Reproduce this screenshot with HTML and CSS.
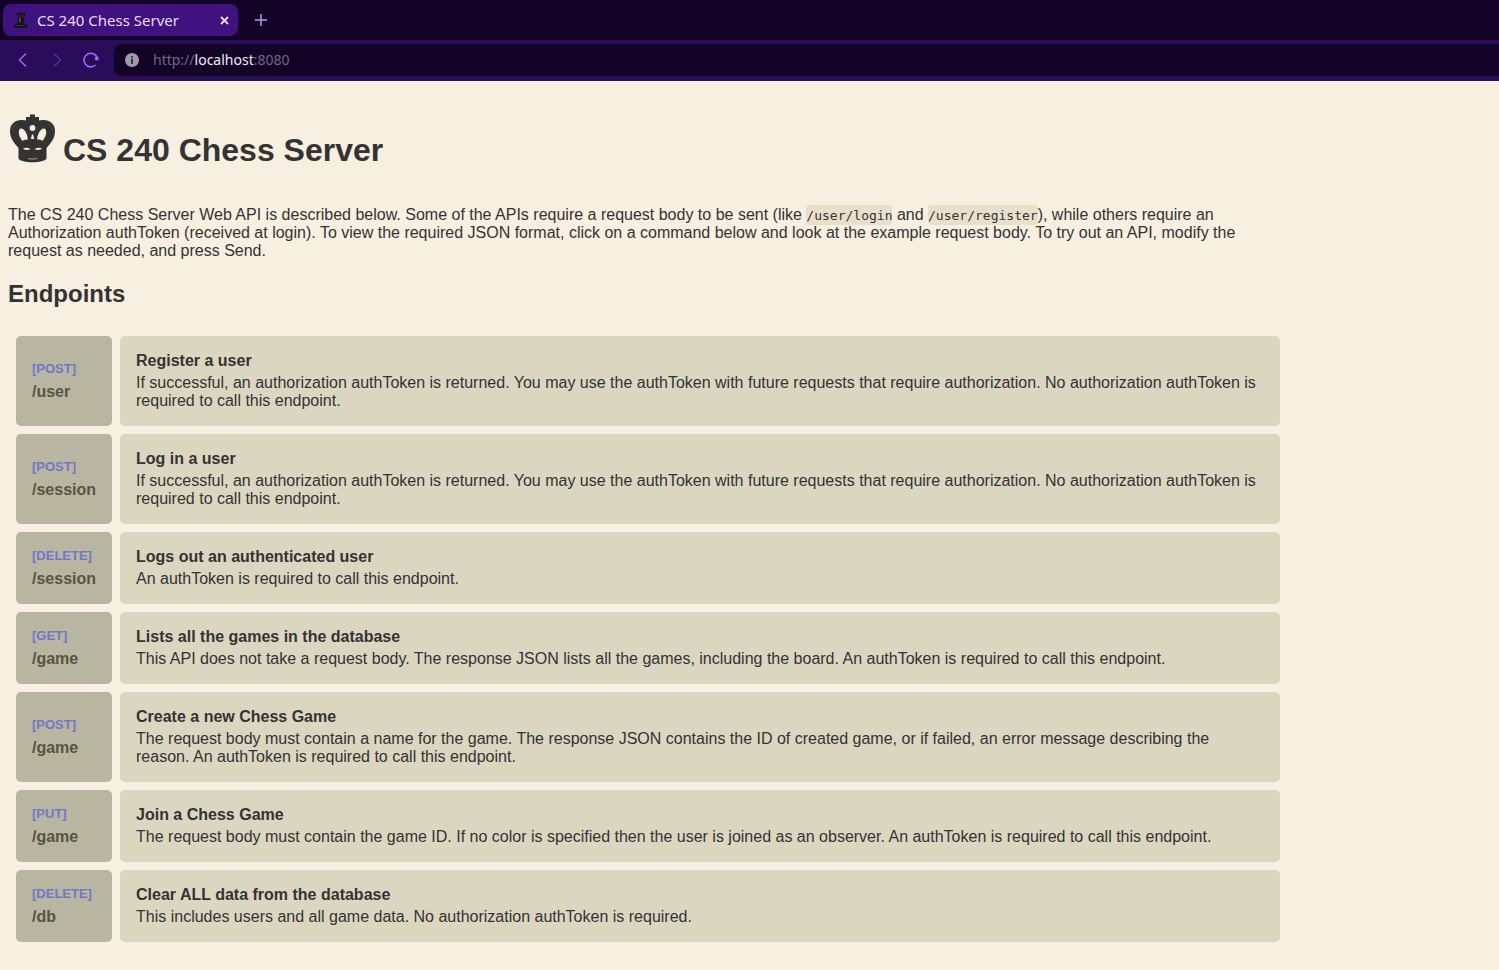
FILE: index.html
```html
<!DOCTYPE html>
<html lang="en">
<head>
<meta charset="utf-8">
<title>CS 240 Chess Server</title>
<link rel="stylesheet" href="styles.css">
</head>
<body>
<header class="browser">
  <div class="tab-strip">
    <div class="tab">
      <svg class="favicon" viewBox="0 0 16 16" aria-hidden="true">
        <path fill="#15131a" d="M4 .500h2V2h1V.500h2.500V2h1V.500H12V4l-1.500 1.500.5 5 1.500 1.500 2 1.500V16H1v-2.500L3.500 12 5 10.500l.5-5L4 4z"/>
        <path fill="#4c4a50" d="M6.500 5.500h1.500v5H6z"/>
        <path fill="#38363c" d="M5 3.500h6v1H5zM3 13h9v1H3z"/>
      </svg>
      <span class="tab-title">CS 240 Chess Server</span>
      <button class="tab-close" aria-label="Close tab">
        <svg width="9" height="9" viewBox="0 0 9 9"><path d="M1 1l7 7M8 1L1 8" fill="none" stroke="#e9dcff" stroke-width="1.800"/></svg>
      </button>
    </div>
    <button class="new-tab" aria-label="New tab">
      <svg width="12" height="12" viewBox="0 0 12 12"><path d="M6 0v12M0 6h12" fill="none" stroke="#b49be6" stroke-width="1.500"/></svg>
    </button>
  </div>
  <div class="toolbar">
    <button class="nav" aria-label="Back">
      <svg width="16" height="16" viewBox="0 0 16 16"><path d="M11 1.500L4.500 8l6.500 6.500" fill="none" stroke="#9a6bf5" stroke-width="1.500"/></svg>
    </button>
    <button class="nav" aria-label="Forward">
      <svg width="16" height="16" viewBox="0 0 16 16"><path d="M5 1.500L11.500 8 5 14.500" fill="none" stroke="#55309a" stroke-width="1.500"/></svg>
    </button>
    <button class="nav" aria-label="Reload">
      <svg width="16" height="16" viewBox="0 0 16 16"><path d="M14.300 6A6.800 6.800 0 1 0 12.500 13" fill="none" stroke="#9a6bf5" stroke-width="1.600"/><circle cx="13.800" cy="6.500" r="2" fill="#9a6bf5"/></svg>
    </button>
    <div class="address">
      <svg class="info" width="14" height="14" viewBox="0 0 14 14" aria-hidden="true"><circle cx="7" cy="7" r="7" fill="#9a9da4"/><path d="M6.100 3h1.800v1.700H6.100zM6.100 5.800h1.800V11H6.100z" fill="#351d54"/></svg>
      <label class="muted" for="host">http://</label><input class="host" id="host" type="text" value="localhost"><span class="muted">:8080</span>
    </div>
  </div>
</header>
<main class="page">
  <h1 class="title">
    <svg class="king" width="49" height="50" viewBox="0 0 49 50" aria-hidden="true">
      <g fill="#333">
        <path d="M22 .500h5V3h4v5h-3v3h-7V8h-3V3h4z"/>
        <path d="M10.500 34C6 29 2 24 2 17 2 10 7 6 13.500 6c5 0 8.500 2 11 5C27 8 30.500 6 35.500 6 42 6 47 10 47 17c0 7-4 12-8.500 17v10.500c-2.500 5-25.500 5-28 0z"/>
      </g>
      <g fill="#f7efe0">
        <circle cx="24.500" cy="14" r="2.900"/>
        <path d="M11.800 15c3.500-2 7.700 4 8 10.500-3 .2-3.500.3-5.500 1.200-2.500-3-5-8.500-2.500-11.700zM37.200 15c-3.500-2-7.700 4-8 10.500 3 .2 3.500.3 5.500 1.200 2.500-3 5-8.500 2.500-11.700zM23.900 20.500h1.200l1 4.500h-3.200z"/>
        <path d="M15 34.500c2-1 5-.8 7.500.5-2.500 1.300-6 1.200-7.500-.5zM34 34.500c-2-1-5-.8-7.500.5 2.500 1.300 6 1.200 7.500-.5z"/>
      </g>
      <path d="M20 44.500c3 .8 6 .8 9 0" fill="none" stroke="#aaa59b"/>
      <path d="M5 17c0-3 1.500-6 4-7.500M44 17c0-3-1.500-6-4-7.500" fill="none" stroke="#504f4d" stroke-width=".8"/>
    </svg>
    <span>CS 240 Chess Server</span>
  </h1>
  <p class="intro">The CS 240 Chess Server Web API is described below. Some of the APIs require a request body to be sent (like <code>/user/login</code> and <code>/user/register</code>), while others require an Authorization authToken (received at login). To view the required JSON format, click on a command below and look at the example request body. To try out an API, modify the request as needed, and press Send.</p>
  <h2 class="subtitle">Endpoints</h2>
  <table class="endpoints">
    <tbody>
      <tr><th scope="row"><span class="method">[POST]</span><span class="path">/user</span></th><td><b>Register a user</b><p>If successful, an authorization authToken is returned. You may use the authToken with future requests that require authorization. No authorization authToken is required to call this endpoint.</p></td></tr>
      <tr><th scope="row"><span class="method">[POST]</span><span class="path">/session</span></th><td><b>Log in a user</b><p>If successful, an authorization authToken is returned. You may use the authToken with future requests that require authorization. No authorization authToken is required to call this endpoint.</p></td></tr>
      <tr><th scope="row"><span class="method">[DELETE]</span><span class="path">/session</span></th><td><b>Logs out an authenticated user</b><p>An authToken is required to call this endpoint.</p></td></tr>
      <tr><th scope="row"><span class="method">[GET]</span><span class="path">/game</span></th><td><b>Lists all the games in the database</b><p>This API does not take a request body. The response JSON lists all the games, including the board. An authToken is required to call this endpoint.</p></td></tr>
      <tr><th scope="row"><span class="method">[POST]</span><span class="path">/game</span></th><td><b>Create a new Chess Game</b><p>The request body must contain a name for the game. The response JSON contains the ID of created game, or if failed, an error message describing the reason. An authToken is required to call this endpoint.</p></td></tr>
      <tr><th scope="row"><span class="method">[PUT]</span><span class="path">/game</span></th><td><b>Join a Chess Game</b><p>The request body must contain the game ID. If no color is specified then the user is joined as an observer. An authToken is required to call this endpoint.</p></td></tr>
      <tr><th scope="row"><span class="method">[DELETE]</span><span class="path">/db</span></th><td><b>Clear ALL data from the database</b><p>This includes users and all game data. No authorization authToken is required.</p></td></tr>
    </tbody>
  </table>
</main>
</body>
</html>
```
FILE: styles.css
```css
* { box-sizing: border-box; }
body {
  margin: 0;
  background: #f7efe0;
  color: #333;
  font: 16px/18px "Liberation Sans", Arial, sans-serif;
}
button {
  display: flex;
  align-items: center;
  justify-content: center;
  padding: 0;
  border: 0;
  background: none;
}

.browser { background: #120327; font-family: "Noto Sans", sans-serif; }
.tab-strip { display: flex; align-items: center; height: 40px; padding: 0 3px; gap: 10px; }
.tab {
  display: flex;
  align-items: center;
  width: 235px;
  height: 32px;
  padding: 0 6px 0 10px;
  gap: 8px;
  border-radius: 8px;
  background: #40127f;
  color: #e9dcff;
  font-size: 15px;
}
.favicon { width: 16px; height: 16px; }
.tab-title { flex: 1; white-space: nowrap; }
.tab-close { width: 16px; height: 24px; }
.new-tab { width: 26px; height: 26px; }
.toolbar { display: flex; align-items: center; padding: 4px 0 5px 6px; background: #290d5a; }
.nav { width: 34px; height: 32px; }
.address {
  display: flex;
  align-items: center;
  flex: 1;
  height: 32px;
  margin-left: 6px;
  padding-left: 11px;
  border-radius: 8px 0 0 8px;
  background: #120327;
  font-size: 14px;
}
.info { margin-right: 14px; }
.muted { color: #716880; }
.host {
  field-sizing: content;
  padding: 0;
  border: 0;
  background: none;
  color: #f3eefb;
  font: inherit;
}

.page { max-width: 1296px; padding: 1px 8px 28px; }
.title {
  display: flex;
  align-items: flex-end;
  gap: 6px;
  margin: 32px 0 38px;
  font-size: 32px;
  line-height: 36px;
}
.king { margin-bottom: 4px; }
.intro { margin: 0 0 20px; }
code {
  padding: 3px 0 2px;
  border-radius: 4px;
  background: #e9e0cb;
  font: 13px/15px "DejaVu Sans Mono", monospace;
}
.subtitle { margin: 0 0 20px; font-size: 24px; line-height: 28px; }
.endpoints { width: 100%; border-spacing: 8px; }
.endpoints th, .endpoints td { padding: 16px; border-radius: 5px; text-align: left; }
.endpoints th { width: 1%; background: #b8b5a1; color: #56553f; vertical-align: middle; }
.endpoints td { background: #dbd6c0; vertical-align: top; }
.endpoints b { display: block; margin-bottom: 4px; }
.endpoints p { margin: 0; }
.method { display: block; margin-bottom: 6px; color: #7376c8; font-size: 13px; line-height: 16px; }
.path { display: block; }
```
